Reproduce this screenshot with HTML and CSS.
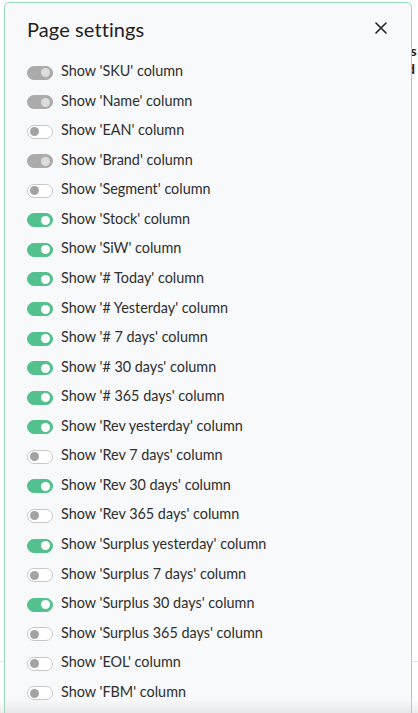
FILE: index.html
```html
<!DOCTYPE html>
<html lang="en">
<head>
<meta charset="utf-8">
<title>Page settings</title>
<link rel="stylesheet" href="styles.css">
</head>
<body>
<div class="page">
  <div class="page-text">
    <div>ls</div>
    <div>d</div>
  </div>
  <div class="page-rule"></div>
</div>

<div class="modal">
  <div class="modal-header">
    <h2 class="modal-title">Page settings</h2>
    <button class="close" aria-label="Close">
      <svg width="12" height="12" viewBox="0 0 12 12"><path d="M1 1L11 11M11 1L1 11" stroke="#222" stroke-width="1.6" stroke-linecap="round"/></svg>
    </button>
  </div>
  <ul class="options">
    <li class="option"><span class="toggle toggle--locked"></span>Show 'SKU' column</li>
    <li class="option"><span class="toggle toggle--locked"></span>Show 'Name' column</li>
    <li class="option"><span class="toggle"></span>Show 'EAN' column</li>
    <li class="option"><span class="toggle toggle--locked"></span>Show 'Brand' column</li>
    <li class="option"><span class="toggle"></span>Show 'Segment' column</li>
    <li class="option"><span class="toggle toggle--on"></span>Show 'Stock' column</li>
    <li class="option"><span class="toggle toggle--on"></span>Show 'SiW' column</li>
    <li class="option"><span class="toggle toggle--on"></span>Show '# Today' column</li>
    <li class="option"><span class="toggle toggle--on"></span>Show '# Yesterday' column</li>
    <li class="option"><span class="toggle toggle--on"></span>Show '# 7 days' column</li>
    <li class="option"><span class="toggle toggle--on"></span>Show '# 30 days' column</li>
    <li class="option"><span class="toggle toggle--on"></span>Show '# 365 days' column</li>
    <li class="option"><span class="toggle toggle--on"></span>Show 'Rev yesterday' column</li>
    <li class="option"><span class="toggle"></span>Show 'Rev 7 days' column</li>
    <li class="option"><span class="toggle toggle--on"></span>Show 'Rev 30 days' column</li>
    <li class="option"><span class="toggle"></span>Show 'Rev 365 days' column</li>
    <li class="option"><span class="toggle toggle--on"></span>Show 'Surplus yesterday' column</li>
    <li class="option"><span class="toggle"></span>Show 'Surplus 7 days' column</li>
    <li class="option"><span class="toggle toggle--on"></span>Show 'Surplus 30 days' column</li>
    <li class="option"><span class="toggle"></span>Show 'Surplus 365 days' column</li>
    <li class="option"><span class="toggle"></span>Show 'EOL' column</li>
    <li class="option"><span class="toggle"></span>Show 'FBM' column</li>
  </ul>
</div>
<div class="bottom-fade"></div>
</body>
</html>
```

FILE: styles.css
```css
html, body {
  margin: 0;
  padding: 0;
  background: #ffffff;
  overflow: hidden;
  height: 713px;
}

body {
  font-family: "Lato", "Noto Sans", sans-serif;
  color: #2b2b2b;
}

.page {
  position: relative;
  height: 713px;
}

.page-text {
  position: absolute;
  left: 407px;
  top: 42px;
  font-size: 14px;
  font-weight: 700;
  line-height: 18px;
  color: #222;
}

.page-rule {
  position: absolute;
  left: 0;
  right: 0;
  top: 661px;
  border-top: 1px solid #e6e6e6;
}

.modal {
  position: absolute;
  left: 4px;
  top: 2px;
  width: 408px;
  height: 760px;
  box-sizing: border-box;
  background: #f8f9fb;
  border: 1.5px solid #96dcbc;
  border-radius: 5px;
}

.modal-header {
  display: flex;
  align-items: center;
  justify-content: space-between;
  padding: 12px 24px 0 22px;
  height: 28px;
}

.modal-title {
  margin: 0;
  font-size: 20px;
  font-weight: 400;
  letter-spacing: 0.1px;
  color: #1e1e1e;
}

.close {
  border: 0;
  background: transparent;
  padding: 0;
  width: 12px;
  height: 12px;
  margin-top: -3px;
  display: flex;
}

.options {
  list-style: none;
  margin: 0;
  padding: 17px 0 0 22px;
  display: flex;
  flex-direction: column;
  gap: 8.57px;
}

.option {
  display: flex;
  align-items: center;
  gap: 8px;
  font-size: 14.4px;
  line-height: 21px;
  color: #2e2e2e;
}

.toggle {
  position: relative;
  flex: none;
  width: 26px;
  height: 14px;
  margin-top: 4px;
  border-radius: 7px;
  box-sizing: border-box;
  border: 1px solid #c8c8c8;
  background: #ffffff;
}

.toggle::after {
  content: "";
  position: absolute;
  top: 1.5px;
  left: 2px;
  width: 9px;
  height: 9px;
  border-radius: 50%;
  background: #a3a3a3;
}

.toggle--on {
  background: #52c18d;
  border-color: #52c18d;
}

.toggle--on::after {
  left: auto;
  right: 2px;
  background: #ffffff;
}

.toggle--locked {
  background: #ababab;
  border-color: #ababab;
}

.toggle--locked::after {
  left: auto;
  right: 2px;
  background: #dcdcdc;
}

.bottom-fade {
  position: absolute;
  left: 0;
  right: 0;
  bottom: 0;
  height: 14px;
  background: linear-gradient(to bottom, rgba(200, 200, 200, 0), rgba(200, 200, 200, 0.35));
}
```
